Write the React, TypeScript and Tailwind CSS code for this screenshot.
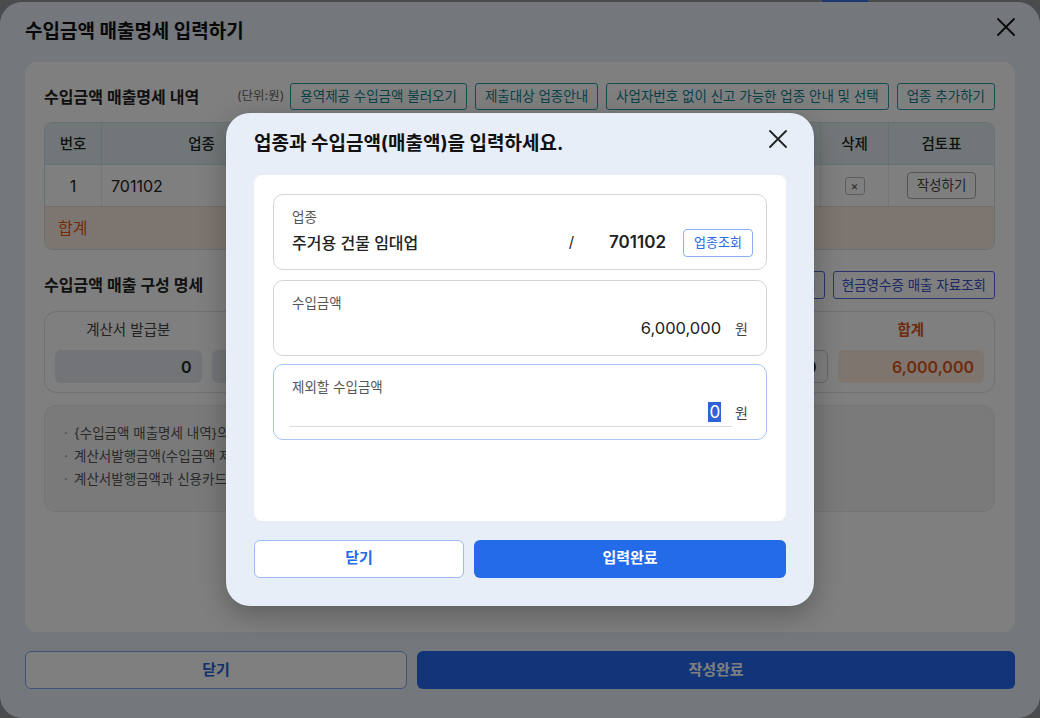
import React from "react";

function CloseIcon({ className }: { className?: string }) {
  return (
    <svg viewBox="0 0 18 18" className={className} fill="none" stroke="currentColor" strokeWidth={1.8} strokeLinecap="round">
      <path d="M1 1L17 17M17 1L1 17" />
    </svg>
  );
}

const tealBtn = "h-[27px] px-[9px] rounded-[3px] border border-[#2a9ea8] text-[13.5px] text-[#11848f] bg-white whitespace-nowrap";
const indigoBtn = "h-[28px] px-2 rounded-[3px] border border-[#5468d8] text-[13.5px] text-[#3a4fc8] bg-white whitespace-nowrap";

const compCols = [
  { label: "계산서 발급분", value: "0", kind: "gray" },
  { label: "계산서 미발급분", value: "0", kind: "gray" },
  { label: "신용카드 매출", value: "0", kind: "gray" },
  { label: "현금영수증 매출", value: "0", kind: "gray" },
  { label: "기타 매출", value: "0", kind: "input" },
  { label: "합계", value: "6,000,000", kind: "sum" },
];

const notes = [
  "{수입금액 매출명세 내역}의 업종별 수입금액 합계와 구성 명세의 합계는 일치해야 합니다.",
  "계산서발행금액(수입금액 제외분 포함)은 국세청에 제출된 자료를 기준으로 조회됩니다.",
  "계산서발행금액과 신용카드 매출 자료는 참고용이며 실제 금액과 다를 수 있습니다.",
];

export default function App() {
  return (
    <div className="relative w-[1040px] h-[718px] overflow-hidden bg-[#94969b] text-[#222] font-[family-name:Inter,Noto_Sans_CJK_KR,sans-serif]">
      <div className="absolute left-[822px] top-0 h-[2px] w-[46px] bg-[#3b6fe0]" />

      {/* page modal behind */}
      <div className="mt-[2px] h-[716px] rounded-[22px] bg-[#e8eef8] flex flex-col">
        <header className="h-[60px] flex justify-between pl-[25px] pr-[25px]">
          <h1 className="self-center text-[19px] font-bold text-[#111]">수입금액 매출명세 입력하기</h1>
          <CloseIcon className="mt-[16px] w-[18px] h-[18px] text-[#111]" />
        </header>

        <main className="mx-[25px] h-[570px] bg-white rounded-xl pl-[19px] pr-[20px] pt-[21px]">
          <div className="flex items-center h-[27px]">
            <h2 className="text-[16px] font-semibold">수입금액 매출명세 내역</h2>
            <div className="ml-auto flex items-center gap-[8px]">
              <span className="text-[12.5px] text-[#666] mr-[-2px]">(단위:원)</span>
              <button className={tealBtn}>용역제공 수입금액 불러오기</button>
              <button className={tealBtn}>제출대상 업종안내</button>
              <button className={tealBtn}>사업자번호 없이 신고 가능한 업종 안내 및 선택</button>
              <button className={tealBtn}>업종 추가하기</button>
            </div>
          </div>

          <div className="mt-[12px] rounded-lg border border-[#cfe3e6] overflow-hidden text-[14.5px]">
            <div className="grid grid-cols-[57px_200px_1fr_1fr_68px_105px] h-[42px] bg-[#e3eff1] font-medium border-b border-[#cfe3e6]">
              {["번호", "업종", "업종명", "수입금액", "삭제", "검토표"].map((h, i) => (
                <div key={h} className={"flex items-center justify-center " + (i < 5 ? "border-r border-[#cfe3e6]" : "")}>{h}</div>
              ))}
            </div>
            <div className="grid grid-cols-[57px_200px_1fr_1fr_68px_105px] h-[42px] border-b border-[#f0d9c8]">
              <div className="flex items-center justify-center border-r border-[#e3ecee] text-[16px]">1</div>
              <div className="flex items-center pl-[9px] border-r border-[#e3ecee] text-[16px]">701102</div>
              <div className="flex items-center pl-[10px] border-r border-[#e3ecee]">주거용 건물 임대업</div>
              <div className="flex items-center justify-end pr-[10px] border-r border-[#e3ecee]">6,000,000</div>
              <div className="flex items-center justify-center border-r border-[#e3ecee]">
                <span className="w-[20px] h-[18px] flex items-center justify-center rounded-[3px] border border-[#bbb] text-[12px] text-[#555]">×</span>
              </div>
              <div className="flex items-center justify-center">
                <button className="h-[27px] w-[69px] rounded-[4px] border border-[#aaa] text-[13.5px] text-[#444] bg-white">작성하기</button>
              </div>
            </div>
            <div className="h-[42px] bg-[#fbece1] flex items-center justify-between pl-[13px] pr-[12px]">
              <span className="text-[16px] text-[#e8590c]">합계</span>
              <span className="text-[15px] font-semibold text-[#e8590c] mr-[180px]">6,000,000</span>
            </div>
          </div>

          <div className="mt-[21px] flex items-center h-[28px]">
            <h2 className="text-[16px] font-semibold">수입금액 매출 구성 명세</h2>
            <div className="ml-auto flex gap-[8px]">
              <button className={indigoBtn}>신용카드 매출 자료조회</button>
              <button className={indigoBtn}>현금영수증 매출 자료조회</button>
            </div>
          </div>

          <div className="mt-[12px] h-[82px] rounded-xl border border-[#dde3ec] px-[10px] pt-[8px] grid grid-cols-6 gap-x-[10px]">
            {compCols.map((c) => (
              <div key={c.label} className="flex flex-col">
                <div className={"h-[20px] leading-[20px] text-center text-[14.5px] " + (c.kind === "sum" ? "text-[#e0561a] font-semibold" : "text-[#444]")}>{c.label}</div>
                <div
                  className={
                    "mt-[10px] h-[33px] rounded-md flex items-center justify-end pr-[10px] text-[16px] font-semibold " +
                    (c.kind === "gray" ? "bg-[#e5e9ef] text-[#222]" : c.kind === "input" ? "bg-white border border-[#c8cdd4] text-[#222]" : "bg-[#fcebdc] text-[#e0561a]")
                  }
                >
                  {c.value}
                </div>
              </div>
            ))}
          </div>

          <div className="mt-[12px] h-[107px] rounded-xl bg-[#f4f5f7] border border-[#e6e8ec] pl-[19px] pt-[16px] text-[13.5px] text-[#555] leading-[23px]">
            {notes.map((n) => (
              <div key={n} className="flex whitespace-nowrap">
                <span className="w-[10px] text-[#999]">·</span>
                <span>{n}</span>
              </div>
            ))}
          </div>
        </main>

        <footer className="flex gap-[10px] px-[25px] pt-[19px]">
          <button className="w-[382px] h-[38px] rounded-md bg-white border border-[#7fa6ee] text-[15px] font-semibold text-[#2463dc]">닫기</button>
          <button className="flex-1 h-[38px] rounded-md bg-[#246af4] text-[15px] font-semibold text-white">작성완료</button>
        </footer>
      </div>

      <div className="absolute inset-0 bg-black/50" />

      {/* dialog */}
      <div className="absolute inset-0 flex items-center justify-center">
        <div className="w-[588px] h-[493px] rounded-[24px] bg-[#e8eef8] px-[28px] shadow-[0_8px_28px_rgba(0,0,0,0.28)] flex flex-col">
          <div className="h-[62px] flex justify-between">
            <h3 className="self-center pt-[2px] text-[19px] font-bold text-[#111]">업종과 수입금액(매출액)을 입력하세요.</h3>
            <CloseIcon className="mt-[17px] mr-[-1px] w-[18px] h-[18px] text-[#222]" />
          </div>

          <div className="h-[346px] rounded-lg bg-white p-[19px] flex flex-col">
            <div className="h-[76px] rounded-[10px] border border-[#d4d4d8] pt-[12px] pl-[18px] pr-[13px]">
              <div className="text-[13.5px] leading-[20px] text-[#555]">업종</div>
              <div className="mt-[2px] h-[28px] flex items-center">
                <span className="flex-1 text-[16px] font-medium text-[#222]">주거용 건물 임대업</span>
                <span className="text-[15px] text-[#222]">/</span>
                <span className="ml-[35px] text-[17px] font-semibold text-[#222]">701102</span>
                <button className="ml-[17px] w-[70px] h-[28px] rounded-[4px] border border-[#8ab0f2] bg-white text-[13px] text-[#2a6ae6]">업종조회</button>
              </div>
            </div>

            <div className="mt-[10px] h-[76px] rounded-[10px] border border-[#d4d4d8] pt-[12px] pl-[18px] pr-[18px]">
              <div className="text-[13.5px] leading-[20px] text-[#555]">수입금액</div>
              <div className="mt-[2px] h-[28px] flex items-center justify-end">
                <span className="text-[16.5px] text-[#222]">6,000,000</span>
                <span className="ml-[14px] text-[14px] text-[#444]">원</span>
              </div>
            </div>

            <div className="mt-[8px] h-[76px] rounded-[10px] border border-[#a9c3f3] pt-[12px] pl-[18px] pr-[18px]">
              <div className="text-[13.5px] leading-[20px] text-[#555]">제외할 수입금액</div>
              <div className="mt-[2px] h-[28px] flex items-center">
                <div className="ml-[-3px] flex-1 h-full border-b border-[#dcdcdc] flex items-center justify-end pr-[11px]">
                  <span className="bg-[#2f62d4] text-white text-[17px] leading-[20px] px-[1px]">0</span>
                </div>
                <span className="ml-[3px] text-[14px] text-[#444]">원</span>
              </div>
            </div>
          </div>

          <div className="mt-[19px] flex gap-[10px]">
            <button className="w-[210px] h-[38px] rounded-md bg-white border border-[#9bbcf5] text-[15px] font-semibold text-[#246be9]">닫기</button>
            <button className="flex-1 h-[38px] rounded-md bg-[#246be9] text-[15px] font-bold text-white">입력완료</button>
          </div>
        </div>
      </div>
    </div>
  );
}
